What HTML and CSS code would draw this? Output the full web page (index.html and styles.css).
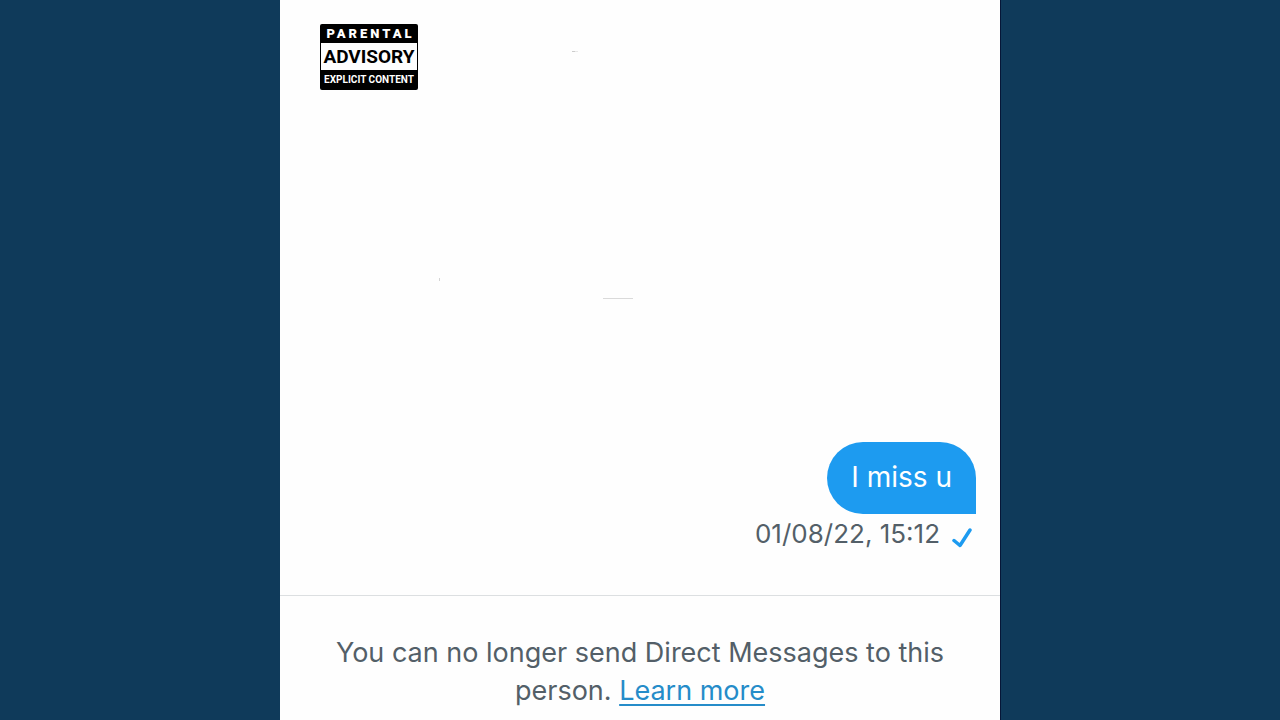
FILE: index.html
```html
<!DOCTYPE html>
<html lang="en">
<head>
    <meta charset="utf-8">
    <title>Direct Messages</title>
    <link rel="stylesheet" href="styles.css">
</head>
<body>
    <main class="chat">
        <svg class="specks" width="200" height="260" viewBox="0 0 200 260" aria-hidden="true">
            <path d="M133 11.500h3" stroke="#cccccc"/>
            <path d="M136 11.500h3" stroke="#e8e8e8"/>
            <path d="M.5 238v3" stroke="#d4d4d4"/>
            <path d="M164 258.500h30" stroke="#dadada"/>
        </svg>
        <section class="messages">
            <div class="advisory">
                <span class="advisory-top">PARENTAL</span>
                <span class="advisory-middle">ADVISORY</span>
                <span class="advisory-bottom">EXPLICIT CONTENT</span>
            </div>
            <div class="sent">
                <p class="bubble">I miss u</p>
                <div class="status">
                    <time datetime="2022-08-01T15:12">01/08/22, 15:12</time>
                    <svg class="check" width="20" height="20" viewBox="0 0 20 20" role="img" aria-label="Sent">
                        <path d="M2 12.500l6 5L18 2" fill="none" stroke="#1d9bf0" stroke-width="3.500" stroke-linecap="round" stroke-linejoin="round"/>
                    </svg>
                </div>
            </div>
        </section>
        <footer class="notice">
            <p>You can no longer send Direct Messages to this person. <a href="#">Learn more</a></p>
        </footer>
    </main>
</body>
</html>
```
FILE: styles.css
```css
* {
    box-sizing: border-box;
}
body {
    margin: 0;
    background: #0f3a5a;
    font-family: Inter, "Liberation Sans", sans-serif;
    color: #535f68;
}
p {
    margin: 0;
}
.chat {
    position: relative;
    display: flex;
    flex-direction: column;
    max-width: 720px;
    min-height: 100vh;
    margin: 0 auto;
    background: #fefefe;
    box-shadow: 1px 0 0 #061638;
}
.specks {
    position: absolute;
    left: 159px;
    top: 40px;
}
.messages {
    flex: 1;
    display: flex;
    flex-direction: column;
    justify-content: space-between;
    padding: 24px 24px 43px 40px;
}
.advisory {
    align-self: flex-start;
    display: grid;
    grid-template-columns: minmax(0, 1fr);
    grid-template-rows: 19px 27px 20px;
    width: 98px;
    border-radius: 2px;
    background: #000;
    color: #fff;
    font-family: Roboto, "Liberation Sans", sans-serif;
    font-weight: bold;
    text-align: center;
    white-space: nowrap;
}
.advisory-top {
    font-size: 13px;
    font-weight: 900;
    line-height: 20px;
    letter-spacing: 3px;
    padding-left: 3px;
}
.advisory-middle {
    margin: 0 1px;
    background: #fefefe;
    color: #000;
    font-size: 19px;
    line-height: 28px;
}
.advisory-bottom {
    font-size: 10px;
    line-height: 20px;
}
.sent {
    display: flex;
    flex-direction: column;
    align-items: flex-end;
}
.bubble {
    padding: 17px 24px 19px;
    border-radius: 36px 36px 0 36px;
    background: #1d9bf0;
    color: #fff;
    font-size: 28px;
    line-height: 36px;
}
.status {
    display: flex;
    align-items: center;
    gap: 12px;
    padding: 2px 4px 0 0;
    font-size: 26px;
    line-height: 36px;
}
.check {
    margin-top: 8px;
}
.notice {
    padding: 38px 40px 10px;
    border-top: 1px solid #dcdfe1;
    font-size: 27px;
    line-height: 38px;
    text-align: center;
}
.notice a {
    color: #258cc9;
    text-decoration: underline;
    text-decoration-thickness: 2px;
    text-underline-offset: 4px;
}
```
